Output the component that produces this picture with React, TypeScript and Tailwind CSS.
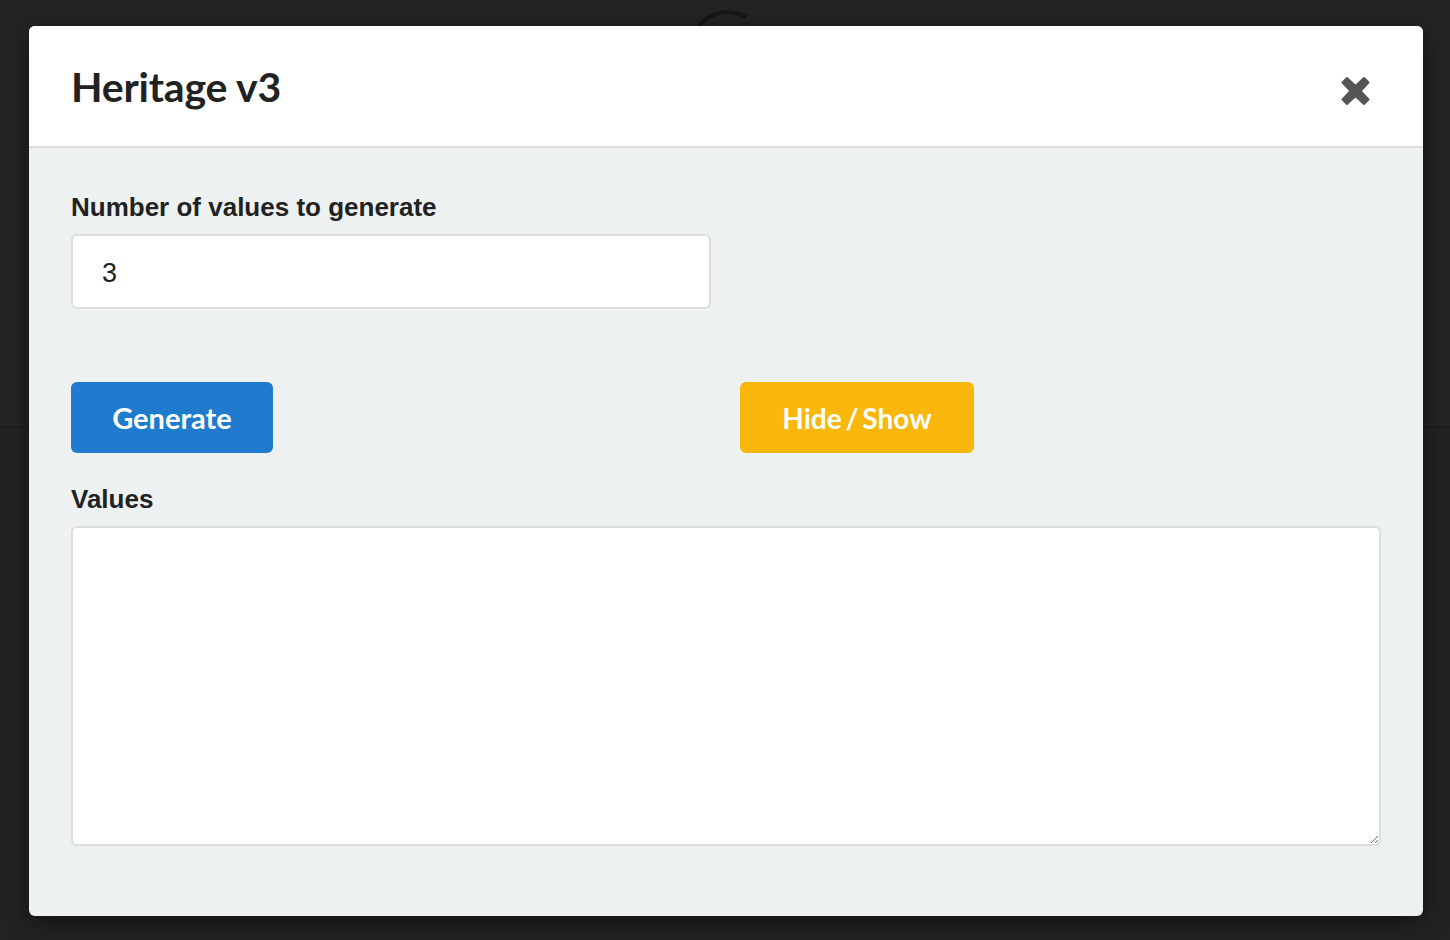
import { useState } from "react";

function CloseIcon() {
  return (
    <svg width="29" height="28" viewBox="0 0 28 28" className="text-[#555]">
      <path
        d="M5.5 1 L14 9 L22.5 1 L27 5.5 L19 14 L27 22.5 L22.5 27 L14 19 L5.5 27 L1 22.5 L9 14 L1 5.5 Z"
        fill="currentColor"
        stroke="currentColor"
        strokeWidth="2"
        strokeLinejoin="round"
      />
    </svg>
  );
}

export default function App() {
  const [count, setCount] = useState("3");
  const [values, setValues] = useState("");

  return (
    <div className="relative h-[940px] w-full overflow-hidden bg-[#232323]">
      {/* page behind the overlay */}
      <div className="absolute inset-x-0 top-0 h-[428px] border-b-2 border-[#1f1f1f] bg-[#242424]" />
      <div className="absolute left-[690px] top-[10px] h-[74px] w-[74px] rounded-full border-[4px] border-transparent border-t-[#161616] -rotate-12" />

      <div className="relative pl-[29px] pt-[26px]">
        <div className="w-[1394px] overflow-hidden rounded-[6px] bg-[#eef1f2] shadow-[0_6px_24px_rgba(0,0,0,0.5)]">
          <div className="flex h-[122px] items-center justify-between border-b-2 border-[#dddddd] bg-white pl-[42px] pr-[53px]">
            <h1 className="font-['Lato',sans-serif] text-[41px] font-bold leading-none text-[#222] tracking-[-0.2px]">
              Heritage v3
            </h1>
            <button className="mt-[10px]">
              <CloseIcon />
            </button>
          </div>

          <div className="px-[42px] pb-[70px] pt-[44px] font-['Liberation_Sans',Arial,sans-serif]">
            <div className="grid grid-cols-2 gap-x-[30px]">
              <div>
                <label className="block text-[26px] font-bold leading-[30px] text-[#222]">
                  Number of values to generate
                </label>
                <input
                  value={count}
                  onChange={(e) => setCount(e.target.value)}
                  className="mt-[12px] block h-[75px] w-full rounded-[6px] border-2 border-[#dddddd] bg-white px-[29px] pt-[3px] text-[27px] text-[#222] outline-none"
                />
              </div>
              <div />
            </div>

            <div className="mt-[73px] grid grid-cols-2 gap-x-[30px]">
              <div>
                <button className="h-[71px] w-[202px] rounded-[6px] bg-[#1f7bcd] font-['Lato',sans-serif] text-[29px] font-bold text-white">
                  Generate
                </button>
              </div>
              <div>
                <button className="-ml-px h-[71px] w-[234px] rounded-[6px] bg-[#f9b60b] font-['Lato',sans-serif] text-[28px] font-bold text-white [word-spacing:-3px]">
                  Hide / Show
                </button>
              </div>
            </div>

            <label className="mt-[31px] block text-[26px] font-bold leading-[30px] text-[#222]">
              Values
            </label>
            <textarea
              value={values}
              onChange={(e) => setValues(e.target.value)}
              className="mt-[12px] block h-[320px] w-full resize-y rounded-[6px] border-2 border-[#dddddd] bg-white p-4 text-[24px] text-[#222] outline-none"
            />
          </div>
        </div>
      </div>
    </div>
  );
}
